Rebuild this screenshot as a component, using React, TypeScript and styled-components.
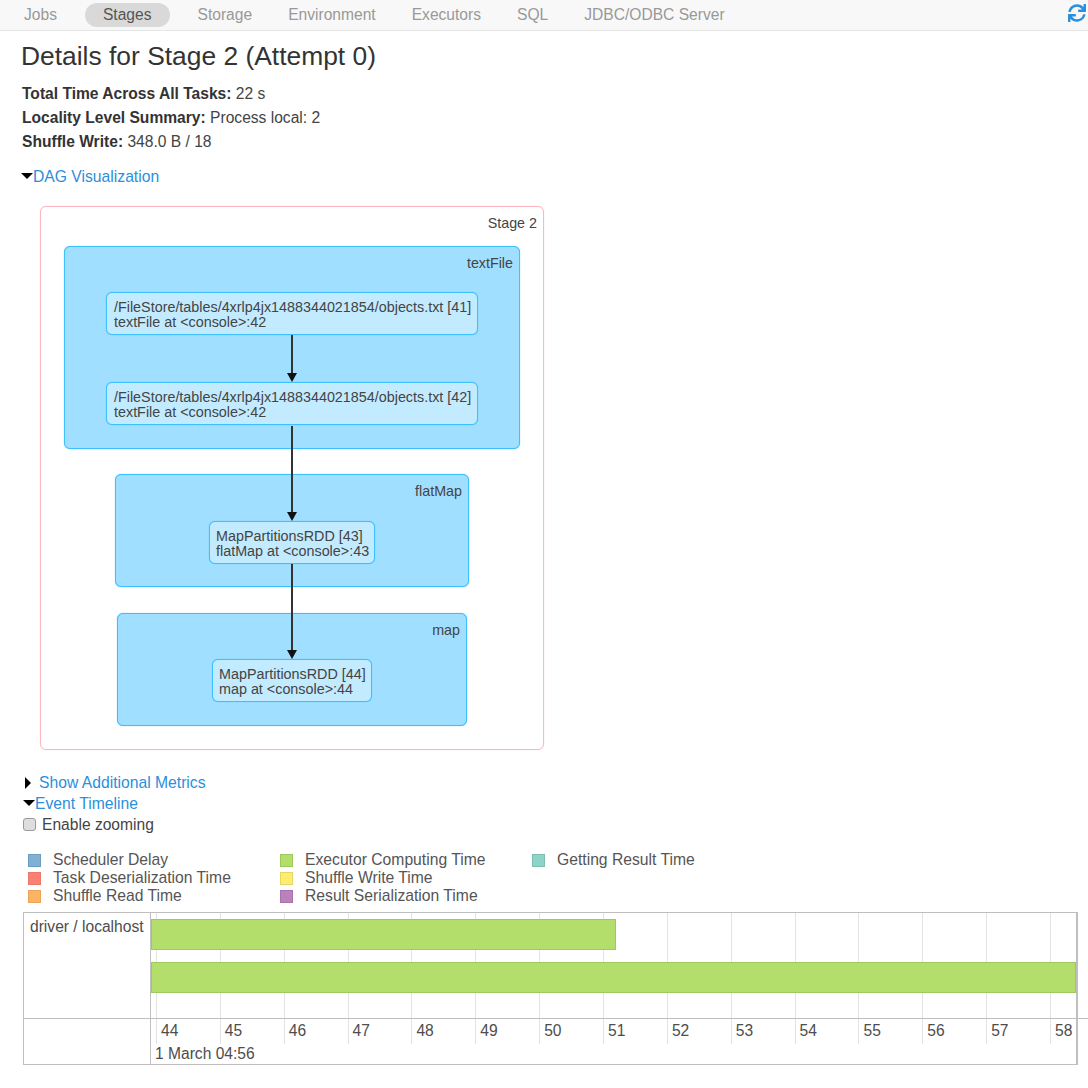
import styled, { createGlobalStyle } from "styled-components";
import { FaSync } from "react-icons/fa";

const GlobalStyle = createGlobalStyle`
  html, body {
    margin: 0;
    padding: 0;
    background: #fff;
    font-family: "Liberation Sans", Arial, sans-serif;
    color: #333;
  }
`;

const TICK_WIDTH = 63.86;

const Page = styled.div`
  width: 1088px;
  height: 1088px;
  overflow: hidden;
`;
const NavBar = styled.nav`
  height: 31px;
  box-sizing: border-box;
  padding: 0 2px 0 6px;
  background: #f8f8f8;
  border-bottom: 1px solid #e5e5e5;
  display: flex;
  align-items: flex-start;
`;
const NavItem = styled.a<{ $active?: boolean }>`
  height: 24px;
  margin: ${(props) => (props.$active ? "3px 10px 0 10px" : "3px 0 0")};
  padding: 0 18px;
  border-radius: 12px;
  font-size: 15.6px;
  line-height: 24px;
  white-space: nowrap;
  color: ${(props) => (props.$active ? "#555" : "#999")};
  background: ${(props) => (props.$active ? "#d9d9d9" : "transparent")};
`;
const Refresh = styled(FaSync)`
  margin: 4px 0 0 auto;
  width: 18px;
  height: 18px;
  color: #2a8fdc;
`;
const Content = styled.main`
  padding: 0 10px 0 21px;
`;
const Title = styled.h3`
  margin: 0;
  padding-top: 10px;
  font-size: 26.4px;
  line-height: 30px;
  font-weight: 400;
  color: #333;
`;
const Summary = styled.ul`
  list-style: none;
  margin: 11px 0 0;
  padding: 0 0 0 1px;
  font-size: 15.6px;
  line-height: 24px;
  color: #444;
  strong {
    font-weight: 700;
    color: #333;
  }
`;
const Toggle = styled.div<{ $top: number; $indent?: number }>`
  margin-top: ${(props) => props.$top}px;
  padding-left: ${(props) => props.$indent ?? 0}px;
  height: 21px;
  display: flex;
  align-items: center;
  font-size: 15.7px;
  line-height: 21px;
  color: #2a8fdc;
`;
const ArrowDown = styled.span`
  width: 0;
  height: 0;
  margin-top: -1px;
  border-left: 6px solid transparent;
  border-right: 6px solid transparent;
  border-top: 6px solid #000;
`;
const ArrowRight = styled.span`
  width: 0;
  height: 0;
  margin: 0 8px 0 4px;
  border-top: 6px solid transparent;
  border-bottom: 6px solid transparent;
  border-left: 6px solid #000;
`;
const Canvas = styled.div`
  position: relative;
  width: 560px;
  height: 574px;
  margin-top: 11px;
`;
const Stage = styled.div`
  position: absolute;
  left: 19px;
  top: 8px;
  width: 504px;
  height: 544px;
  box-sizing: border-box;
  border: 1px solid #ffb6c1;
  border-radius: 6px;
  box-shadow: 0 0 1px #ffb6c1;
`;
const StageLabel = styled.span`
  position: absolute;
  right: 6px;
  top: 8px;
  font-size: 14.3px;
  line-height: 16px;
  color: #444;
`;
const Cluster = styled.div<{ $x: number; $y: number; $w: number; $h: number }>`
  position: absolute;
  left: ${(props) => props.$x}px;
  top: ${(props) => props.$y}px;
  width: ${(props) => props.$w}px;
  height: ${(props) => props.$h}px;
  box-sizing: border-box;
  background: #a0dfff;
  border: 1px solid #3ec0ff;
  border-radius: 6px;
  box-shadow: 0 0 1px #3ec0ff;
`;
const ClusterLabel = styled.span`
  position: absolute;
  right: 6px;
  top: 8px;
  font-size: 14.3px;
  line-height: 16px;
  color: #444;
`;
const RddNode = styled.div<{ $x: number; $y: number; $w: number; $pad: number }>`
  position: absolute;
  left: ${(props) => props.$x}px;
  top: ${(props) => props.$y}px;
  width: ${(props) => props.$w}px;
  height: 43px;
  box-sizing: border-box;
  padding: 7px 0 0 ${(props) => props.$pad}px;
  background: #c3ebff;
  border: 1px solid #3ec0ff;
  border-radius: 6px;
  box-shadow: 0 0 1px #3ec0ff;
  font-size: 14.35px;
  line-height: 15px;
  color: #444;
  white-space: nowrap;
`;
const Edges = styled.svg`
  position: absolute;
  left: 0;
  top: 0;
`;
const CheckRow = styled.label`
  display: flex;
  align-items: center;
  height: 21px;
  font-size: 15.6px;
  color: #444;
`;
const CheckBox = styled.span`
  width: 13px;
  height: 13px;
  margin: 0 6px 0 2px;
  box-sizing: border-box;
  background: #dedede;
  border: 1px solid #9a9a9a;
  border-radius: 3px;
`;
const Legend = styled.div`
  display: grid;
  grid-template-columns: 252px 252px 252px;
  grid-auto-flow: column;
  grid-template-rows: repeat(3, 18px);
  margin: 16px 0 0 7px;
`;
const LegendItem = styled.div`
  display: flex;
  align-items: center;
  font-size: 15.7px;
  color: #555;
  white-space: nowrap;
`;
const Swatch = styled.span<{ $color: string; $edge: string }>`
  width: 13px;
  height: 13px;
  margin-right: 12px;
  box-sizing: border-box;
  background: ${(props) => props.$color};
  border: 1px solid ${(props) => props.$edge};
`;
const Timeline = styled.div`
  display: grid;
  grid-template-columns: 127px 1fr;
  grid-template-rows: 106px 46px;
  box-sizing: border-box;
  width: 1055px;
  height: 153px;
  margin: 7px 0 0 2px;
  border: 1px solid #bfbfbf;
  border-right-width: 2px;
`;
const GroupLabel = styled.div`
  padding: 5px 0 0 6px;
  font-size: 15.6px;
  line-height: 18px;
  color: #4d4d4d;
  border-right: 1px solid #bfbfbf;
  border-bottom: 1px solid #bfbfbf;
`;
const Bars = styled.div`
  position: relative;
  border-bottom: 1px solid #bfbfbf;
  display: flex;
  flex-direction: column;
  gap: 12px;
  padding-top: 6px;
`;
const Bar = styled.div<{ $width: number }>`
  position: relative;
  width: ${(props) => props.$width}px;
  height: 31px;
  box-sizing: border-box;
  background: #b3de6b;
  border: 1px solid #9dc95f;
`;
const GridLines = styled.div`
  position: absolute;
  inset: 0;
  display: flex;
  padding-left: 5px;
`;
const GridLine = styled.span`
  flex: 0 0 ${TICK_WIDTH}px;
  box-sizing: border-box;
  border-left: 1px solid #e3e3e3;
`;
const EmptyCell = styled.div`
  border-right: 1px solid #bfbfbf;
`;
const Axis = styled.div`
  display: flex;
  flex-direction: column;
`;
const AxisTicks = styled.div`
  display: flex;
  height: 25px;
  padding-left: 5px;
`;
const AxisTick = styled.span`
  flex: 0 0 ${TICK_WIDTH}px;
  box-sizing: border-box;
  border-left: 1px solid #e3e3e3;
  padding: 3px 0 0 4px;
  font-size: 15.6px;
  line-height: 18px;
  color: #4d4d4d;
`;
const AxisDate = styled.span`
  margin: 1px 0 0 4px;
  font-size: 15.6px;
  line-height: 18px;
  color: #4d4d4d;
`;

const navItems = [
  { name: "Jobs" },
  { name: "Stages", active: true },
  { name: "Storage" },
  { name: "Environment" },
  { name: "Executors" },
  { name: "SQL" },
  { name: "JDBC/ODBC Server" },
];
const legend = [
  { label: "Scheduler Delay", color: "#80b1d3", edge: "#6b9dc0" },
  { label: "Task Deserialization Time", color: "#fb8072", edge: "#e87a6c" },
  { label: "Shuffle Read Time", color: "#fdb462", edge: "#e9a55c" },
  { label: "Executor Computing Time", color: "#b3de69", edge: "#9dc95f" },
  { label: "Shuffle Write Time", color: "#ffed6f", edge: "#e6d666" },
  { label: "Result Serialization Time", color: "#bc80bd", edge: "#a873a9" },
  { label: "Getting Result Time", color: "#8dd3c7", edge: "#7fbfb3" },
];
const seconds = [44, 45, 46, 47, 48, 49, 50, 51, 52, 53, 54, 55, 56, 57, 58];

export default function App() {
  return (
    <Page>
      <GlobalStyle />
      <NavBar>
        {navItems.map((item) => (
          <NavItem key={item.name} $active={item.active}>
            {item.name}
          </NavItem>
        ))}
        <Refresh />
      </NavBar>
      <Content>
        <Title>Details for Stage 2 (Attempt 0)</Title>
        <Summary>
          <li>
            <strong>Total Time Across All Tasks:</strong> 22 s
          </li>
          <li>
            <strong>Locality Level Summary:</strong> Process local: 2
          </li>
          <li>
            <strong>Shuffle Write:</strong> 348.0 B / 18
          </li>
        </Summary>
        <Toggle $top={12}>
          <ArrowDown />
          DAG Visualization
        </Toggle>
        <Canvas>
          <Stage>
            <StageLabel>Stage 2</StageLabel>
            <Cluster $x={23} $y={39} $w={456} $h={203}>
              <ClusterLabel>textFile</ClusterLabel>
              <RddNode $x={41} $y={45} $w={372} $pad={7}>
                /FileStore/tables/4xrlp4jx1488344021854/objects.txt [41]
                <br />
                textFile at &lt;console&gt;:42
              </RddNode>
              <RddNode $x={41} $y={135} $w={372} $pad={7}>
                /FileStore/tables/4xrlp4jx1488344021854/objects.txt [42]
                <br />
                textFile at &lt;console&gt;:42
              </RddNode>
            </Cluster>
            <Cluster $x={74} $y={267} $w={354} $h={113}>
              <ClusterLabel>flatMap</ClusterLabel>
              <RddNode $x={93} $y={46} $w={166} $pad={6}>
                MapPartitionsRDD [43]
                <br />
                flatMap at &lt;console&gt;:43
              </RddNode>
            </Cluster>
            <Cluster $x={76} $y={406} $w={350} $h={113}>
              <ClusterLabel>map</ClusterLabel>
              <RddNode $x={94} $y={45} $w={160} $pad={6}>
                MapPartitionsRDD [44]
                <br />
                map at &lt;console&gt;:44
              </RddNode>
            </Cluster>
          </Stage>
          <Edges width="560" height="574" viewBox="0 0 560 574">
            <g fill="#111" stroke="#333" strokeWidth="2">
              <path d="M271 137V176" fill="none" />
              <path d="M266 175h10l-5 9z" stroke="none" />
              <path d="M271 228V315" fill="none" />
              <path d="M266 314h10l-5 9z" stroke="none" />
              <path d="M271 366V453" fill="none" />
              <path d="M266 452h10l-5 9z" stroke="none" />
            </g>
          </Edges>
        </Canvas>
        <Toggle $top={0}>
          <ArrowRight />
          Show Additional Metrics
        </Toggle>
        <Toggle $top={0} $indent={2}>
          <ArrowDown />
          Event Timeline
        </Toggle>
        <CheckRow>
          <CheckBox />
          Enable zooming
        </CheckRow>
        <Legend>
          {legend.map((item) => (
            <LegendItem key={item.label}>
              <Swatch $color={item.color} $edge={item.edge} />
              {item.label}
            </LegendItem>
          ))}
        </Legend>
        <Timeline>
          <GroupLabel>driver / localhost</GroupLabel>
          <Bars>
            <GridLines>
              {seconds.map((s) => (
                <GridLine key={s} />
              ))}
            </GridLines>
            <Bar $width={465} />
            <Bar $width={925} />
          </Bars>
          <EmptyCell />
          <Axis>
            <AxisTicks>
              {seconds.map((s) => (
                <AxisTick key={s}>{s}</AxisTick>
              ))}
            </AxisTicks>
            <AxisDate>1 March 04:56</AxisDate>
          </Axis>
        </Timeline>
      </Content>
    </Page>
  );
}
